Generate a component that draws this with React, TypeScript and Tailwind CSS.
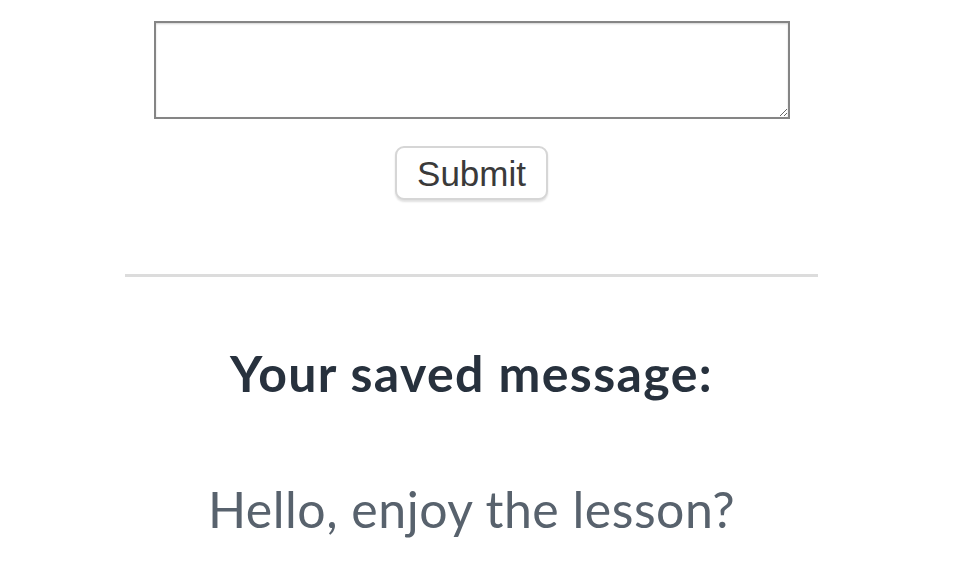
export default function App() {
  return (
    <div className="w-[975px] h-[568px] overflow-hidden bg-white">
      <div className="ml-[125px] w-[693px] flex flex-col items-center">
        <textarea
          className="mt-[21px] w-[636px] h-[98px] border-2 border-[#858585] bg-white resize-y shadow-[inset_0_1px_2px_rgba(0,0,0,0.18)]"
          aria-label="message"
        />
        <button className="mt-[27px] w-[153px] h-[54px] rounded-[9px] border-2 border-[#d6d6d6] bg-white shadow-[0_2px_2px_rgba(0,0,0,0.12)] font-['Liberation_Sans',sans-serif] text-[35px] leading-none text-[#3a3a3a]">
          Submit
        </button>
        <div className="mt-[74px] w-full h-[3px] bg-[#dcdcdc]" />
        <h2 className="mt-[71px] font-['Lato',sans-serif] font-bold text-[50px] leading-none tracking-[1.4px] text-[#27313d]">
          Your saved message:
        </h2>
        <p className="mt-[86px] font-['Lato',sans-serif] text-[50px] leading-none tracking-[0.5px] text-[#58626d]">
          Hello, enjoy the lesson?
        </p>
      </div>
    </div>
  );
}
